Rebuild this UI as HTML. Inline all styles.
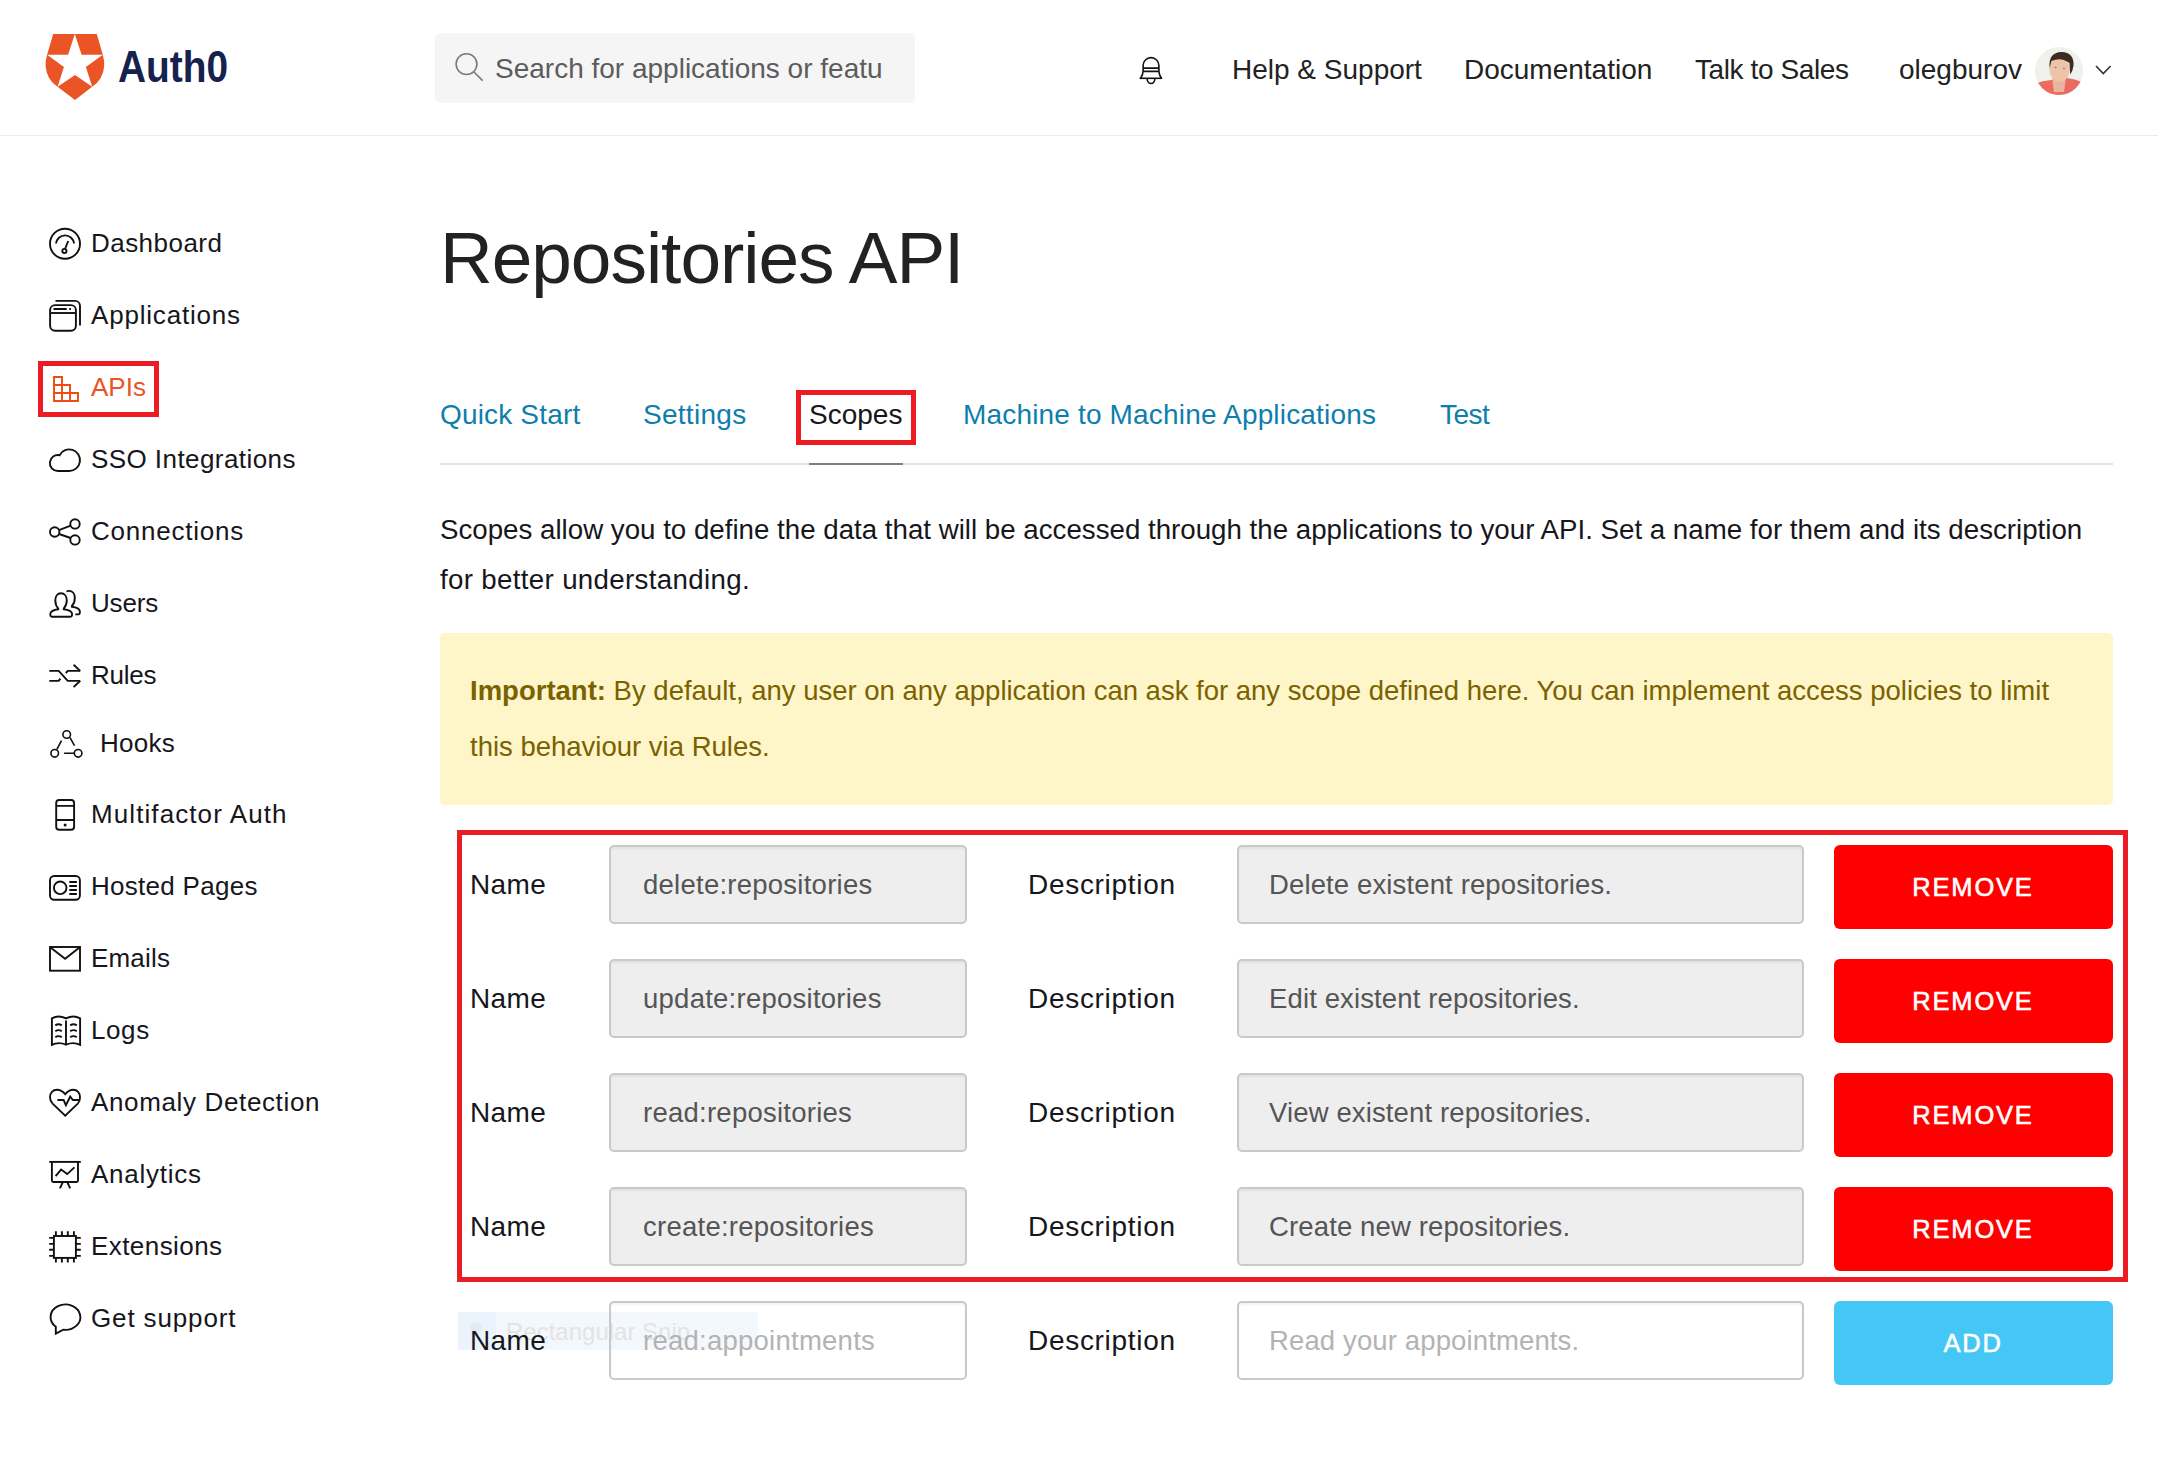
<!DOCTYPE html>
<html><head><meta charset="utf-8">
<style>
*{margin:0;padding:0;box-sizing:border-box}
html,body{width:2158px;height:1460px;overflow:hidden;background:#fff}
body{position:relative;font-family:"Liberation Sans",sans-serif;color:#222}
.a{position:absolute;white-space:nowrap;line-height:1}
.hdr{position:absolute;left:0;top:0;width:2158px;height:136px;border-bottom:1px solid #ebebeb}
.nav{font-size:28px;color:#222}
.side{font-size:26px;color:#16161c}
.tab{font-size:28px;color:#0e7eac}
.lbl{font-size:28px;color:#16161c}
.inp{position:absolute;height:79px;border:2px solid #c9c9c9;border-radius:5px;background:#eee;box-shadow:inset 0 2px 2px rgba(0,0,0,0.05)}
.inp span{position:absolute;left:32px;letter-spacing:0.25px;top:1px;line-height:74px;font-size:27.5px;color:#555;white-space:nowrap}
.btn{position:absolute;left:1834px;width:279px;height:84px;border-radius:6px;background:#ff0000;color:#fff;font-size:25.5px;letter-spacing:1.8px;text-indent:-1px;text-align:center;line-height:84px;font-weight:normal;-webkit-text-stroke:0.6px #fff}
#ov{position:absolute;left:0;top:0;width:2158px;height:1460px;pointer-events:none}

</style></head>
<body>
<div class="hdr"></div>
<div class="a" style="left:118px;top:44.5px;font-size:44.5px;font-weight:bold;color:#16214d;transform:scaleX(0.873);transform-origin:0 0">Auth0</div>
<div style="position:absolute;left:435px;top:33px;width:480px;height:70px;border-radius:6px;background:#f5f5f5"></div>
<div class="a" style="left:495px;top:55px;font-size:28px;color:#5c5c5c;width:388px;overflow:hidden">Search for applications or features</div>
<div class="a nav" style="left:1232px;top:55.5px">Help &amp; Support</div>
<div class="a nav" style="left:1464px;top:55.5px">Documentation</div>
<div class="a nav" style="left:1695px;top:55.5px;letter-spacing:-0.4px">Talk to Sales</div>
<div class="a nav" style="left:1899px;top:55.5px">olegburov</div>
<div class="a side" style="left:91px;top:230.0px;color:#16161c;letter-spacing:0.46px">Dashboard</div>
<div class="a side" style="left:91px;top:302.0px;color:#16161c;letter-spacing:0.81px">Applications</div>
<div class="a side" style="left:91px;top:374.0px;color:#eb5424;letter-spacing:0px">APIs</div>
<div class="a side" style="left:91px;top:446.0px;color:#16161c;letter-spacing:0.43px">SSO Integrations</div>
<div class="a side" style="left:91px;top:518.0px;color:#16161c;letter-spacing:0.77px">Connections</div>
<div class="a side" style="left:91px;top:590.0px;color:#16161c;letter-spacing:-0.17px">Users</div>
<div class="a side" style="left:91px;top:662.0px;color:#16161c;letter-spacing:-0.25px">Rules</div>
<div class="a side" style="left:100px;top:730.0px;color:#16161c;letter-spacing:0.27px">Hooks</div>
<div class="a side" style="left:91px;top:801.0px;color:#16161c;letter-spacing:1.09px">Multifactor Auth</div>
<div class="a side" style="left:91px;top:873.0px;color:#16161c;letter-spacing:0.28px">Hosted Pages</div>
<div class="a side" style="left:91px;top:945.0px;color:#16161c;letter-spacing:0.18px">Emails</div>
<div class="a side" style="left:91px;top:1017.0px;color:#16161c;letter-spacing:0.6px">Logs</div>
<div class="a side" style="left:91px;top:1089.0px;color:#16161c;letter-spacing:0.64px">Anomaly Detection</div>
<div class="a side" style="left:91px;top:1161.0px;color:#16161c;letter-spacing:0.73px">Analytics</div>
<div class="a side" style="left:91px;top:1233.0px;color:#16161c;letter-spacing:0.43px">Extensions</div>
<div class="a side" style="left:91px;top:1305.0px;color:#16161c;letter-spacing:0.86px">Get support</div>
<div class="a" style="left:440px;top:221px;font-size:73px;color:#222;letter-spacing:-1.02px">Repositories API</div>
<div class="a tab" style="left:440px;top:401px;letter-spacing:0.17px">Quick Start</div>
<div class="a tab" style="left:643px;top:401px;letter-spacing:0.28px">Settings</div>
<div class="a tab" style="left:809px;top:401px;color:#16161c">Scopes</div>
<div class="a tab" style="left:963px;top:401px;letter-spacing:0.17px">Machine to Machine Applications</div>
<div class="a tab" style="left:1440px;top:401px;letter-spacing:-0.5px">Test</div>
<div style="position:absolute;left:440px;top:463px;width:1673px;height:2px;background:#e3e3e3"></div>
<div style="position:absolute;left:809px;top:463px;width:94px;height:2px;background:#7f7f7f"></div>
<div class="a" style="left:440px;top:516px;font-size:27.7px;color:#16161c">Scopes allow you to define the data that will be accessed through the applications to your API. Set a name for them and its description</div>
<div class="a" style="left:440px;top:566px;font-size:27.7px;color:#16161c;letter-spacing:0.33px">for better understanding.</div>
<div style="position:absolute;left:440px;top:633px;width:1673px;height:171.5px;border-radius:5px;background:#fef5c9"></div>
<div class="a" style="left:470px;top:677px;font-size:27.5px;color:#7a6200"><b>Important:</b> By default, any user on any application can ask for any scope defined here. You can implement access policies to limit</div>
<div class="a" style="left:470px;top:733px;font-size:27.5px;color:#7a6200">this behaviour via Rules.</div>
<div style="position:absolute;left:458px;top:1312px;width:300px;height:38px;background:#f3f8fd"></div>
<div style="position:absolute;left:458px;top:1312px;width:38px;height:38px;background:#ebf3fc"></div>
<div style="position:absolute;left:470px;top:1322px;width:12px;height:12px;border-radius:50%;background:#e4eaf0"></div>
<div class="a" style="left:506px;top:1320px;font-size:24px;color:#e6e2e2">Rectangular Snip</div>
<div class="a lbl" style="left:470px;top:871.3px;letter-spacing:0.4px">Name</div>
<div class="inp" style="left:609px;top:845px;width:358px;background:#eee"><span style="color:#555">delete:repositories</span></div>
<div class="a lbl" style="left:1028px;top:871.3px;letter-spacing:0.7px">Description</div>
<div class="inp" style="left:1236.5px;top:845px;width:567px;background:#eee"><span style="color:#555;left:30.5px;letter-spacing:0.13px">Delete existent repositories.</span></div>
<div class="btn" style="top:845px">REMOVE</div>
<div class="a lbl" style="left:470px;top:985.3px;letter-spacing:0.4px">Name</div>
<div class="inp" style="left:609px;top:959px;width:358px;background:#eee"><span style="color:#555">update:repositories</span></div>
<div class="a lbl" style="left:1028px;top:985.3px;letter-spacing:0.7px">Description</div>
<div class="inp" style="left:1236.5px;top:959px;width:567px;background:#eee"><span style="color:#555;left:30.5px;letter-spacing:0.13px">Edit existent repositories.</span></div>
<div class="btn" style="top:959px">REMOVE</div>
<div class="a lbl" style="left:470px;top:1099.3px;letter-spacing:0.4px">Name</div>
<div class="inp" style="left:609px;top:1073px;width:358px;background:#eee"><span style="color:#555">read:repositories</span></div>
<div class="a lbl" style="left:1028px;top:1099.3px;letter-spacing:0.7px">Description</div>
<div class="inp" style="left:1236.5px;top:1073px;width:567px;background:#eee"><span style="color:#555;left:30.5px;letter-spacing:0.13px">View existent repositories.</span></div>
<div class="btn" style="top:1073px">REMOVE</div>
<div class="a lbl" style="left:470px;top:1213.3px;letter-spacing:0.4px">Name</div>
<div class="inp" style="left:609px;top:1187px;width:358px;background:#eee"><span style="color:#555">create:repositories</span></div>
<div class="a lbl" style="left:1028px;top:1213.3px;letter-spacing:0.7px">Description</div>
<div class="inp" style="left:1236.5px;top:1187px;width:567px;background:#eee"><span style="color:#555;left:30.5px;letter-spacing:0.13px">Create new repositories.</span></div>
<div class="btn" style="top:1187px">REMOVE</div>
<div class="a lbl" style="left:470px;top:1327.3px;letter-spacing:0.4px">Name</div>
<div class="inp" style="left:609px;top:1301px;width:358px;background:transparent"><span style="color:#b3b3b3">read:appointments</span></div>
<div class="a lbl" style="left:1028px;top:1327.3px;letter-spacing:0.7px">Description</div>
<div class="inp" style="left:1236.5px;top:1301px;width:567px;background:transparent"><span style="color:#b3b3b3;left:30.5px;letter-spacing:0.13px">Read your appointments.</span></div>
<div class="btn" style="top:1301px;background:#44c7f4">ADD</div>
<div style="position:absolute;left:38px;top:361px;width:121px;height:56px;border:5px solid #ec1c24"></div>
<div style="position:absolute;left:796px;top:390px;width:120px;height:55px;border:5px solid #ec1c24"></div>
<div style="position:absolute;left:457px;top:830px;width:1671px;height:452px;border:5px solid #ec1c24"></div>
<svg id="ov" width="2158" height="1460" viewBox="0 0 2158 1460">
<!-- logo -->
<path d="M53.2 34 L96.8 34 L102.8 54.7 Q104.6 61 104.2 66 Q103.2 79.5 92.2 86.8 L75 100 L57.6 86.8 Q46.5 79.5 45.6 66 Q45.2 61 47.1 54.7 Z" fill="#eb5424"/>
<polygon points="74.8,34 81.6,54.7 102.8,54.7 85.9,67.1 92.2,86.8 75,75 57.6,86.8 63.9,67.1 47.1,54.7 68.1,54.7" fill="#fff"/>
<!-- search icon -->
<g fill="none" stroke="#7a7a7a" stroke-width="1.6">
<circle cx="466.5" cy="64.1" r="10.4"/>
<line x1="474" y1="72" x2="482.6" y2="80.6"/>
</g>
<!-- bell -->
<g fill="none" stroke="#111" stroke-width="1.6">
<path d="M1139.6 78.3 H1162.2"/>
<path d="M1140.6 78.2 Q1143.1 74.5 1143.1 71 V65.6 A7.9 8 0 0 1 1158.9 65.6 V71 Q1158.9 74.5 1161.3 78.2"/>
<path d="M1143.1 68.1 H1158.9 M1143.1 71.4 H1158.9"/>
<path d="M1147.1 78.3 A3.9 5.2 0 0 0 1154.9 78.3"/>
</g>
<!-- avatar -->
<clipPath id="avc"><circle cx="2059" cy="71" r="24"/></clipPath>
<g clip-path="url(#avc)">
<rect x="2030" y="42" width="60" height="60" fill="#eff1ed"/>
<path d="M2030 86 Q2040 81 2051 80 L2067 78 Q2078 79 2090 86 V100 H2030 Z" fill="#ec6b61"/>
<path d="M2052 78 L2066 76 L2064 92 L2054 92 Z" fill="#e9b59e"/>
<ellipse cx="2059.6" cy="69.5" rx="10.2" ry="12.3" fill="#eec3aa"/>
<path d="M2049.6 68 Q2048 52.5 2061.5 52 Q2074.5 52.5 2073.5 66 Q2072.8 71 2070.2 74.5 L2069.5 63 Q2061 56.5 2051.5 61 Z" fill="#3d2b21"/>
<ellipse cx="2055.5" cy="67.5" rx="1.2" ry="0.8" fill="#7b8a80"/>
<ellipse cx="2064" cy="68.5" rx="1.2" ry="0.8" fill="#7b8a80"/>
</g>
<!-- chevron -->
<path d="M2096 66 L2103.3 73.5 L2110.6 66" fill="none" stroke="#333" stroke-width="1.6"/>
<!-- sidebar icons -->
<g fill="none" stroke="#111" stroke-width="1.9">
<!-- dashboard -->
<circle cx="65" cy="243.7" r="15"/>
<path d="M56 243.5 A9.1 9.1 0 0 1 74.1 243.5"/>
<path d="M68.2 241 L65 249"/>
<circle cx="64.4" cy="251" r="2.1"/>
<!-- applications -->
<rect x="50.1" y="305.1" width="25.8" height="25.7" rx="5"/>
<path d="M50.1 313 H75.9"/>
<path d="M53.5 309 H66.7 M69.3 309 H71"/>
<path d="M55.5 300.9 H75 A5 5 0 0 1 80 305.9 V325.6"/>
<!-- hosted pages -->
<rect x="50" y="876" width="29.9" height="23.8" rx="4.2"/>
<circle cx="60.2" cy="887.8" r="6.3"/>
<path d="M69.3 882 H76.9 M69.3 886 H76.9 M69.3 890 H76.9 M69.3 894 H76.9"/>
<!-- emails -->
<rect x="50" y="947" width="30" height="23.7"/>
<path d="M50.5 947.5 L65.1 958.8 L79.5 947.5"/>
<!-- logs -->
<path d="M51.9 1018.3 V1044.8 Q58.5 1041.5 66 1044.6 Q73.5 1041.5 80.1 1044.8 V1018.3 Q73.5 1014.8 66 1018.4 Q58.5 1014.8 51.9 1018.3 Z"/>
<path d="M66 1020.5 V1044"/>
<path d="M55.3 1025.4 Q58.5 1023.2 61.8 1025.4 M55.3 1031.2 Q58.5 1029 61.8 1031.2 M55.3 1037.2 Q58.5 1035 61.8 1037.2"/>
<path d="M70.2 1025.4 Q73.5 1023.2 76.8 1025.4 M70.2 1031.2 Q73.5 1029 76.8 1031.2 M70.2 1037.2 Q73.5 1035 76.8 1037.2"/>
<!-- anomaly -->
<path d="M65.2 1094.2 C62.5 1091 59.8 1089.8 57 1089.8 C52.8 1089.8 50 1093 50 1097.3 C50 1100 51 1102 52.6 1103.6 L65.2 1115.6 L77.8 1103.6 C79.4 1102 80 1100 80 1097.3 C80 1093 77.2 1089.8 73.3 1089.8 C70.6 1089.8 67.9 1091 65.2 1094.2 Z"/>
<path d="M57.4 1100 H63.6 L65.9 1105.2 L70.2 1096.6 L72.9 1100 H80"/>
<!-- analytics -->
<path d="M49.3 1161.9 H80.8"/>
<path d="M51.9 1161.9 V1180.5 Q51.9 1182 53.4 1182 H76.5 Q78 1182 78 1180.5 V1161.9"/>
<path d="M55.6 1176.2 L61.1 1169.6 L67.2 1174.1 L74.4 1167.4"/>
<path d="M62.9 1182 L59.9 1188.4 M67.2 1182 L70.2 1188.4"/>
<!-- extensions -->
<rect x="53.9" y="1236" width="22" height="21.9"/>
<path d="M55.9 1231.3 V1236 M61.9 1231.3 V1236 M67.8 1231.3 V1236 M73.9 1231.3 V1236"/>
<path d="M55.9 1258 V1262.6 M61.9 1258 V1262.6 M67.8 1258 V1262.6 M73.9 1258 V1262.6"/>
<path d="M49.2 1237.9 H54 M49.2 1243.9 H54 M49.2 1249.8 H54 M49.2 1255.9 H54"/>
<path d="M76 1237.9 H80.8 M76 1243.9 H80.8 M76 1249.8 H80.8 M76 1255.9 H80.8"/>
<!-- get support -->
<path d="M55.8 1326.8 A14.9 12.7 0 1 1 63.3 1329.7 L55.8 1333.6 Z" stroke-linejoin="miter"/>
<!-- sso cloud -->
<path d="M57.8 471 A8 8 0 1 1 59.6 455.2 A10.8 10.8 0 1 1 69.3 471 Z"/>
<!-- users -->
<path d="M61 593.3 C57.5 593.3 55.3 596.2 55.3 600.3 C55.3 604 56.3 606.5 58.2 608.4 V609.2 C53.8 609.9 50.9 611 50.4 613.4 C50.1 615.5 50.6 616.8 52 616.8 H70.4 C71.8 616.8 72.3 615.5 72 613.4 C71.5 611 68.6 609.9 63.8 609.2 V608.4 C65.7 606.5 66.8 604 66.8 600.3 C66.8 596.2 64.5 593.3 61 593.3 Z"/>
<path d="M66.5 591.3 C67.3 591 68.2 590.9 69 590.9 C72.5 590.9 74.8 593.8 74.8 597.9 C74.8 601.6 73.8 604.1 71.9 606 V606.8 C76.5 607.5 79.3 608.6 79.8 611 C80.1 613.1 79.6 614.4 78.2 614.4 H75.3"/>
<!-- connections -->
<circle cx="54.7" cy="532" r="4.7"/>
<circle cx="75" cy="523.9" r="4.7"/>
<circle cx="75" cy="539.9" r="4.7"/>
<path d="M59 530.1 L70.6 525.7 M59 534 L70.6 538"/>
<!-- rules -->
<path d="M49.3 670.9 H58.7 L67.7 680.9 H80.2"/>
<path d="M49.3 680.9 H58.7 L60.4 678.6"/>
<path d="M65.8 673 L67.8 670.9 H80.2"/>
<path d="M73.6 664.8 L80.2 670.9 M73.6 687 L80.2 680.9"/>
</g>
<!-- hooks -->
<g fill="none" stroke="#111" stroke-width="1.6">
<circle cx="66.7" cy="734.5" r="3.8"/>
<circle cx="54.7" cy="753.3" r="3.8"/>
<circle cx="78.1" cy="753.3" r="3.8"/>
<path d="M70 737.6 L74.5 745.6 M56.9 749.3 L61.5 740.6 M64.1 753.3 H74.2"/>
</g>
<!-- mfa -->
<g fill="none" stroke="#111" stroke-width="1.9">
<rect x="56.2" y="800" width="17.9" height="29.8" rx="3"/>
<path d="M56.2 805.9 H74.1 M56.2 820 H74.1"/>
</g>
<circle cx="65.1" cy="825" r="1.5" fill="#111"/>
<!-- apis -->
<g fill="none" stroke="#eb4d12" stroke-width="1.9" stroke-linecap="square">
<path d="M54 377 H62 V385 H70 V393 H78 V401 H54 Z"/>
<path d="M54 385 H62 M54 393 H70 M62 385 V401 M70 393 V401"/>
</g>
</svg>
</body></html>
